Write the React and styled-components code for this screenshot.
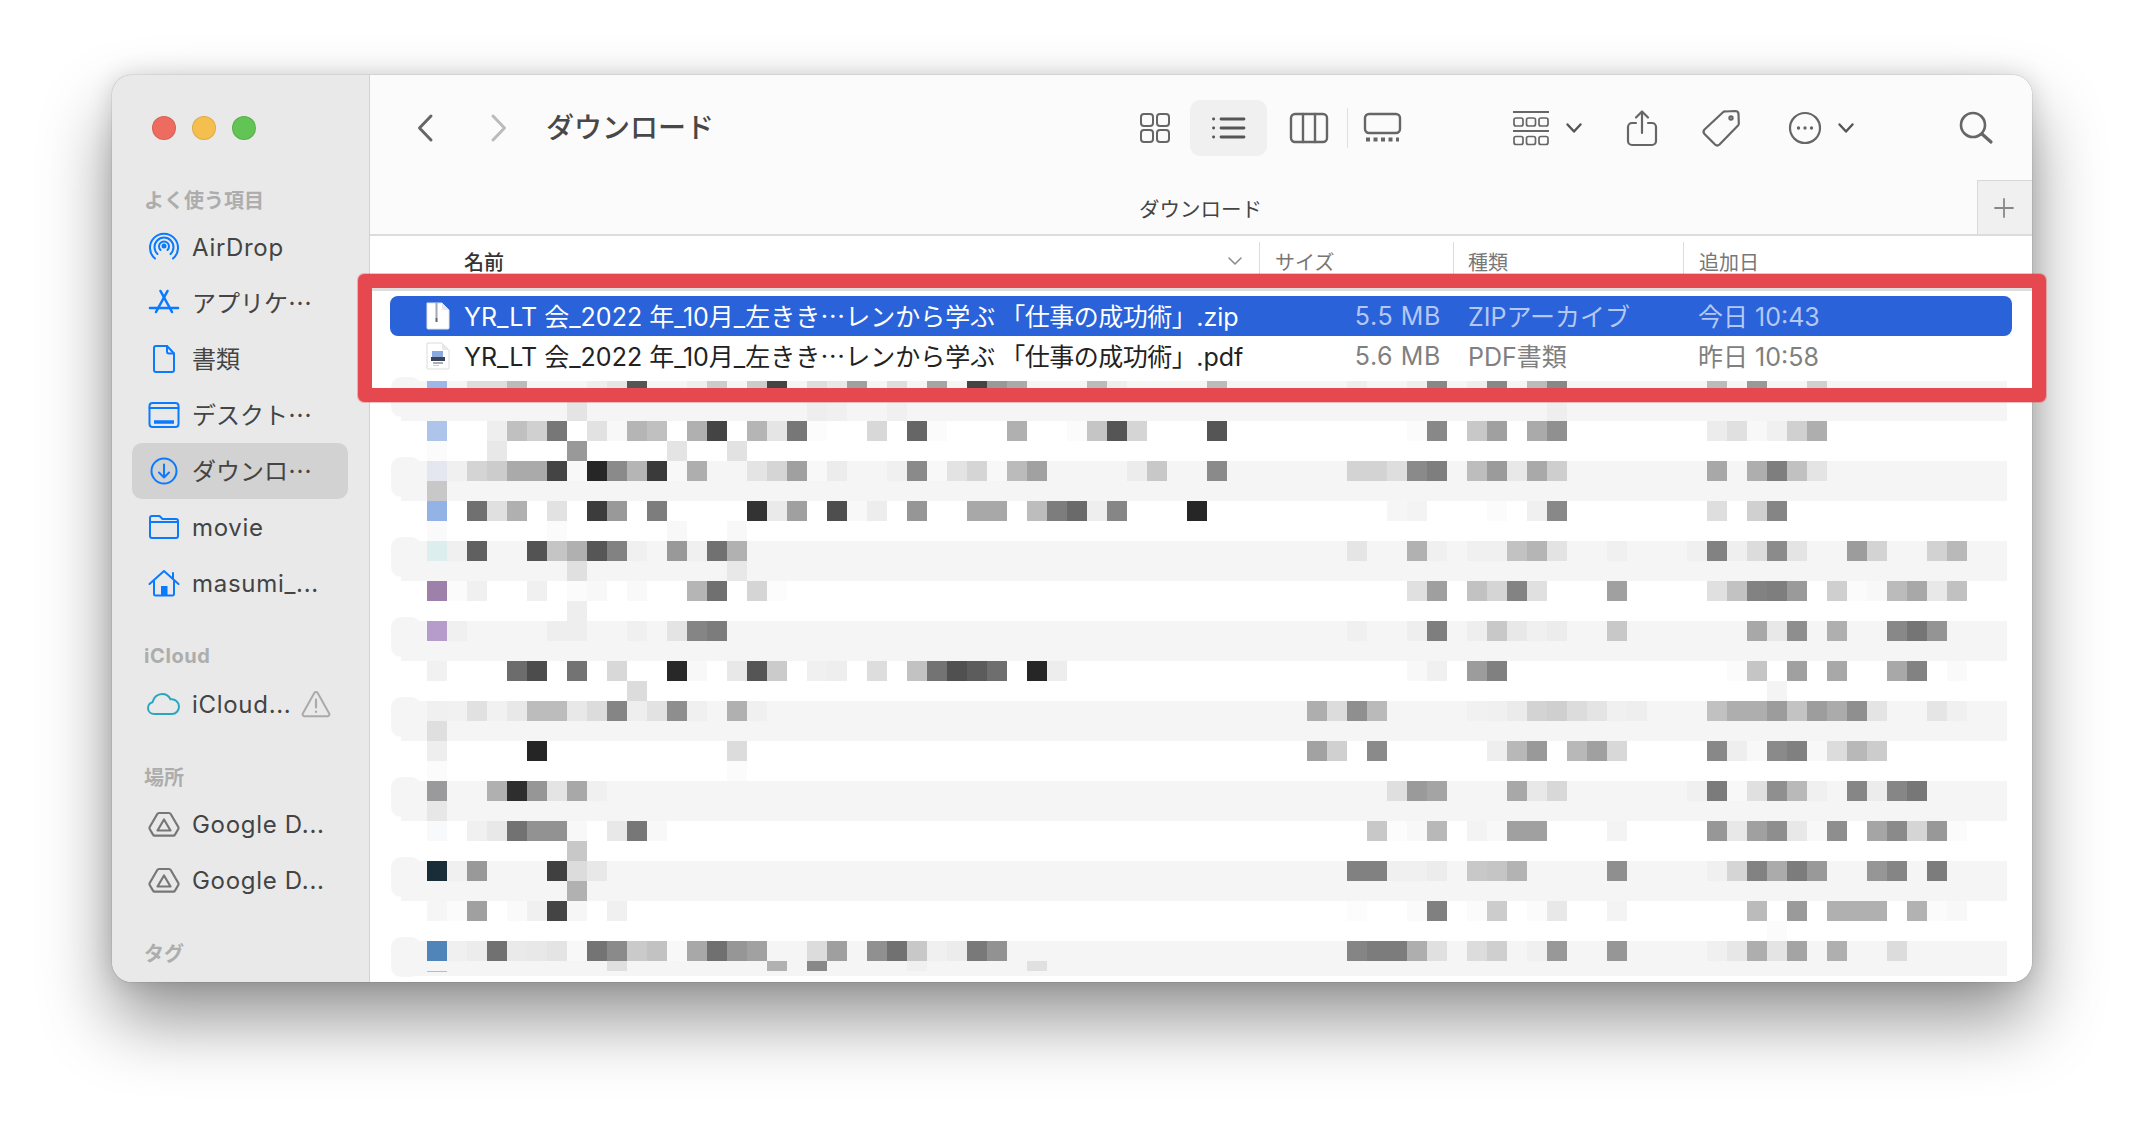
import styled, { createGlobalStyle } from 'styled-components';

const GlobalStyle = createGlobalStyle`
  html, body {
    margin: 0;
    background: #fff;
    font-family: Inter, "Noto Sans CJK JP", sans-serif;
  }
`;

const CJK = `"Noto Sans CJK JP", Inter, sans-serif`;

const Stage = styled.div`
  position: relative;
  width: 2144px;
  height: 1130px;
  padding: 75px 0 0 112px;
  box-sizing: border-box;
  overflow: hidden;
`;

const FinderWindow = styled.div`
  display: flex;
  width: 1920px;
  height: 907px;
  border-radius: 20px;
  overflow: hidden;
  box-shadow: 0 38px 70px rgba(0, 0, 0, 0.42), 0 0 24px rgba(0, 0, 0, 0.14), 0 0 1px rgba(0, 0, 0, 0.6);
`;

/* sidebar */
const Sidebar = styled.aside`
  width: 257px;
  flex-shrink: 0;
  background: #e9e9e9;
  border-right: 1px solid #d2d2d2;
`;

const TrafficLights = styled.div`
  display: flex;
  gap: 16px;
  padding: 41px 0 39px 40px;
`;

const Light = styled.span`
  width: 24px;
  height: 24px;
  border-radius: 50%;
  box-sizing: border-box;
  background: ${({ $color }) => $color};
  border: 1px solid rgba(0, 0, 0, 0.1);
`;

const SectionLabel = styled.div`
  height: 40px;
  line-height: 41px;
  padding-left: 32px;
  margin-top: ${({ $gap }) => $gap || 0}px;
  font-family: ${({ $latin }) => ($latin ? 'Inter, sans-serif' : CJK)};
  font-size: 20px;
  font-weight: 700;
  letter-spacing: ${({ $latin }) => ($latin ? '0.6px' : '0')};
  color: #adadad;
`;

const SideItem = styled.div`
  display: flex;
  align-items: center;
  height: 56px;
  margin: 0 21px 0 20px;
  padding-left: 14px;
  gap: 10px;
  border-radius: 10px;
  background: ${({ $active }) => ($active ? '#d2d2d2' : 'transparent')};
`;

const SideIcon = styled.svg`
  width: 36px;
  height: 36px;
  flex-shrink: 0;
  fill: none;
  stroke: ${({ $tone }) => $tone || '#0a7aff'};
  stroke-width: ${({ $sw }) => $sw || 2};
  stroke-linecap: round;
  stroke-linejoin: round;
`;

const SideText = styled.span`
  font-family: ${({ $cjk }) => ($cjk ? CJK : 'Inter, sans-serif')};
  font-size: 24px;
  letter-spacing: ${({ $cjk }) => ($cjk ? '0' : '0.7px')};
  padding-bottom: ${({ $cjk }) => ($cjk ? '4px' : '0')};
  color: #444;
  white-space: nowrap;
`;

const WarnIcon = styled.svg`
  width: 30px;
  height: 28px;
  fill: none;
  stroke: #aaa;
  stroke-width: 2;
  stroke-linejoin: round;
  stroke-linecap: round;
`;

/* main panel */
const Main = styled.main`
  flex: 1;
  display: flex;
  flex-direction: column;
  min-width: 0;
  background: #fff;
`;

const Toolbar = styled.div`
  display: flex;
  align-items: center;
  height: 105px;
  flex-shrink: 0;
  padding-left: 47px;
  background: #fbfbfb;
`;

const Slot = styled.div`
  display: flex;
  align-items: center;
  justify-content: center;
  flex-shrink: 0;
  width: ${({ $w }) => $w}px;
  margin-left: ${({ $ml }) => $ml || 0}px;
`;

const ActiveSlot = styled(Slot)`
  height: 56px;
  border-radius: 10px;
  background: #f0f0f0;
`;

const Divider = styled.div`
  width: 1px;
  height: 40px;
  margin-left: ${({ $ml }) => $ml}px;
  background: #e0e0e0;
`;

const Tool = styled.svg`
  display: block;
  fill: none;
  stroke: ${({ $tone }) => $tone || '#666'};
  stroke-width: ${({ $sw }) => $sw || 2};
  stroke-linecap: round;
  stroke-linejoin: round;
  overflow: visible;
`;

const Title = styled.h1`
  margin: 0 0 0 39px;
  padding-bottom: 3px;
  width: 163px;
  flex-shrink: 0;
  font-family: ${CJK};
  font-size: 28px;
  font-weight: 500;
  color: #484848;
  white-space: nowrap;
`;

const TabBar = styled.div`
  display: flex;
  align-items: stretch;
  height: 56px;
  flex-shrink: 0;
  box-sizing: border-box;
  background: #fbfbfb;
  border-bottom: 2px solid #dcdcdc;
`;

const TabTitle = styled.div`
  flex: 1;
  padding-left: 769px;
  line-height: 56px;
  font-family: ${CJK};
  font-size: 20.5px;
  color: #444;
`;

const NewTab = styled.div`
  display: flex;
  align-items: center;
  justify-content: center;
  width: 55px;
  padding-right: 2px;
  box-sizing: border-box;
  background: #f0f0f0;
  border-left: 1px solid #d8d8d8;
  border-top: 1px solid #d8d8d8;
`;

const ColumnHeader = styled.div`
  display: flex;
  align-items: flex-end;
  height: 55px;
  flex-shrink: 0;
  box-sizing: border-box;
  border-bottom: 3px solid #dedede;
`;

const ColumnCell = styled.div`
  position: relative;
  display: flex;
  align-items: center;
  justify-content: space-between;
  width: ${({ $w }) => $w}px;
  flex-shrink: 0;
  height: 46px;
  padding-bottom: 8px;
  box-sizing: border-box;
  padding-left: ${({ $pl }) => $pl}px;
  padding-right: ${({ $pr }) => $pr || 0}px;
  border-left: ${({ $line }) => ($line ? '1px solid #dcdcdc' : 'none')};
  font-family: ${CJK};
  font-size: 20px;
  font-weight: ${({ $strong }) => ($strong ? 500 : 400)};
  color: ${({ $strong }) => ($strong ? '#333' : '#777')};
`;

const FileRow = styled.div`
  display: flex;
  align-items: center;
  height: 40px;
  margin-left: 20px;
  width: 1622px;
  margin-top: ${({ $mt }) => $mt || 0}px;
  border-radius: 8px;
  background: ${({ $selected }) => ($selected ? '#2a62d9' : 'transparent')};
  font-size: 25px;
  color: ${({ $selected }) => ($selected ? '#fff' : '#222')};
  white-space: nowrap;
`;

const FileIconBox = styled.svg`
  width: 24px;
  height: 28px;
  margin-left: 36px;
  flex-shrink: 0;
`;

const FileName = styled.span`
  width: 829px;
  flex-shrink: 0;
  margin-left: 14px;
  padding-bottom: 3px;
`;

const Jp = styled.span`
  font-family: ${CJK};
`;

// the quoted part sits a little apart from the kana before it
const QuotedTitle = styled(Jp)`
  margin-left: 5px;
  letter-spacing: -0.5px;
`;

const MetaSize = styled.span`
  width: 148px;
  flex-shrink: 0;
  padding-bottom: 1px;
  text-align: right;
  letter-spacing: 0.6px;
  color: ${({ $selected }) => ($selected ? '#b4c8f3' : '#808080')};
`;

const MetaKind = styled.span`
  width: 230px;
  margin-left: 27px;
  flex-shrink: 0;
  padding-bottom: 3px;
  color: ${({ $selected }) => ($selected ? '#b4c8f3' : '#808080')};
`;

const MetaDate = styled.span`
  padding-bottom: 3px;
  color: ${({ $selected }) => ($selected ? '#b4c8f3' : '#808080')};
`;

/* pixelated rows that hide the other files */
const MosaicList = styled.div`
  flex: 1;
  min-height: 0;
  padding: 5px 0 0 31px;
`;

const MosaicRow = styled.div`
  position: relative;
  width: 1606px;
  height: ${({ $h }) => $h}px;
  background: ${({ $stripe }) => ($stripe ? '#f4f5f4' : 'transparent')};
  ${({ $stripe }) =>
    $stripe
      ? `&::before {
    content: '';
    position: absolute;
    left: -10px;
    top: -4px;
    width: 30px;
    height: 40px;
    border-radius: 10px;
    background: #f4f5f4;
  }`
      : ''}
`;

const MosaicLine = styled.div`
  position: relative;
  display: grid;
  grid-template-columns: repeat(79, 20px);
  grid-template-rows: 1fr;
  height: ${({ $h }) => $h}px;
  padding-left: 26px;
`;

const MosaicCell = styled.div`
  grid-row: 1;
`;

const Annotation = styled.div`
  position: absolute;
  left: 358px;
  top: 274px;
  width: 1688px;
  height: 128px;
  box-sizing: border-box;
  border: 14px solid #e5494f;
  border-radius: 6px;
  box-shadow: 0 0 0 1px rgba(229, 73, 79, 0.35);
`;

const toColor = (v) => (v.length === 2 ? `#${v}${v}${v}` : `#${v}`);

const parseLine = (line) =>
  line
    .split(' ')
    .filter(Boolean)
    .map((token) => {
      const [col, value] = token.split(':');
      return { col: Number(col), color: toColor(value) };
    });

// each row holds two 20px lines of "column:gray" or "column:rrggbb" cells
const MOSAIC = [
  [
    '0:9db8e8 2:dd 3:dd 4:bb 8:ee 9:e5 10:55 13:ee 14:cc 16:cc 17:44 19:dd 20:e8 21:a0 23:dd 25:a5 27:44 28:99 29:aa 33:bb 34:ee 39:bb 46:ee 49:ee 50:88 52:ee 53:88 55:bb 56:88 64:bb 66:99 69:d0',
    '7:e4 19:ee 20:f0 23:f0 56:ee',
  ],
  [
    '0:afc4ea 3:ee 4:c0 5:d0 6:77 8:e2 9:f8 10:b5 11:c0 13:b0 14:44 16:b5 17:e5 18:77 19:fc 22:d8 24:66 25:fb 29:b0 32:fb 33:c5 34:55 35:d5 39:55 49:fb 50:88 52:c8 53:a0 55:aa 56:90 64:ec 65:e0 66:f8 67:f0 68:d0 69:ae',
    '0:fb 3:e8 7:99 12:e4 15:e2',
  ],
  [
    '0:e4e6f0 1:f0 2:d4 3:cc 4:aa 5:aa 6:44 7:f8 8:26 9:8a 10:b5 11:3a 12:f8 13:ae 16:e4 17:d5 18:a0 19:f8 20:ec 23:f0 24:8a 25:f8 26:e3 27:d5 28:f8 29:bb 30:a1 35:ec 36:c8 39:8a 46:d3 47:d3 48:de 49:8a 50:7e 52:bd 53:9b 54:e8 55:a9 56:ce 64:a8 66:ae 67:7e 68:c1 69:e4',
    '0:c8',
  ],
  [
    '0:93b2e6 2:70 3:e0 4:b0 6:e2 8:3c 9:99 11:7d 16:33 17:ea 18:a0 20:4e 21:f8 22:ed 24:96 27:a8 28:a8 30:bd 31:7d 32:6a 33:ee 34:86 38:26 48:f6 49:f3 53:fb 55:f0 56:88 64:de 66:d0 67:85',
    '0:fa 6:fb 12:f8 15:f8',
  ],
  [
    '0:dcefee 1:f0 2:60 5:53 6:c5 7:b0 8:56 9:82 10:f0 12:99 13:f0 14:71 15:b1 46:e5 49:b1 50:f0 52:f0 53:f0 54:c2 55:b5 56:e3 59:f0 63:f0 64:82 65:ef 66:dc 67:8b 68:e4 71:9c 72:d3 75:d2 76:b9',
    '7:e0 15:e8',
  ],
  [
    '0:9d81aa 1:fb 2:f0 5:f0 7:fb 8:f8 10:f9 13:b5 14:70 16:d5 17:fc 49:e0 50:9f 52:c2 53:d5 54:83 55:e0 59:a0 64:e0 65:c2 66:82 67:7e 68:9a 70:cf 71:fb 72:f8 73:bb 74:a8 75:e8 76:c1',
    '7:ee',
  ],
  [
    '0:b69cca 1:f0 6:ee 7:ee 10:f0 12:e4 13:85 14:7c 46:f0 49:ee 50:7e 52:ee 53:c8 54:e8 55:f0 56:ec 59:c8 66:a8 67:e8 68:8e 70:af 73:88 74:75 75:94',
    '',
  ],
  [
    '0:f1 4:6c 5:4c 7:73 9:d8 12:28 13:f8 15:e8 16:55 17:cb 19:f0 20:ee 22:dd 24:c2 25:73 26:50 27:5c 28:6e 30:26 31:ed 49:f8 50:f0 52:9c 53:80 65:fb 66:c5 68:a0 70:a8 73:a8 74:82 76:fa',
    '10:dc 67:f4',
  ],
  [
    '0:f0 1:f1 2:e1 3:f1 4:e8 5:bc 6:bc 7:e8 8:dc 9:85 10:ee 11:e2 12:8e 13:f0 15:b0 16:f0 44:ae 45:dc 46:8f 47:ba 52:f1 53:f0 54:eb 55:d3 56:cf 57:dc 58:e4 59:f0 60:ee 64:c1 65:ae 66:ae 67:9c 68:c3 69:9d 70:ab 71:8f 72:e4 75:e5 76:f0',
    '0:df',
  ],
  [
    '0:ee 5:25 15:dc 44:a2 45:d0 47:8a 53:ee 54:b8 55:99 57:b8 58:a0 59:d8 64:88 65:ee 66:f8 67:8a 68:80 69:f8 70:dc 71:b8 72:cc',
    '0:fb 15:fb',
  ],
  [
    '0:9a9a9d 3:b0 4:2e 5:96 6:e4 7:a8 8:f0 48:df 49:9a 50:a4 54:a8 55:e8 56:d8 63:f0 64:7b 65:f8 66:e0 67:8f 68:b9 69:f0 71:86 72:ec 73:86 74:77',
    '0:e7',
  ],
  [
    '0:f8f9fb 2:f0 3:e8 4:72 5:92 6:92 7:f8 9:e8 10:77 11:f8 47:c8 48:fc 49:f8 50:b8 52:f3 53:f8 54:a0 55:a0 59:f3 64:97 65:e8 66:a0 67:8e 68:e8 69:f8 70:8e 72:a5 73:8a 74:d5 75:98 76:fb',
    '7:c8',
  ],
  [
    '0:192d39 1:f0 2:99 6:40 7:dc 8:e8 46:81 47:81 48:f0 49:f0 50:ec 52:c8 53:c5 54:b3 59:8f 64:f0 65:d5 66:82 67:ab 68:7c 69:99 72:96 73:85 75:7c',
    '7:b1',
  ],
  [
    '0:f6 1:fb 2:a0 4:fa 5:f0 6:44 7:f6 9:f0 46:fc 49:fa 50:80 52:fb 53:cc 55:fb 56:e8 59:f3 66:bb 68:9a 70:b0 71:b0 72:b0 74:b2 75:fb 76:f8',
    '67:fb',
  ],
];

const LAST_ROW = {
  lines: [
    '0:5085ba 1:f0 2:ec 3:71 4:ea 5:e8 6:e4 7:f8 8:74 9:8a 10:ca 11:c2 12:f8 13:a8 14:70 15:96 16:a1 19:dc 20:9f 22:90 23:71 24:c8 25:f0 26:ec 27:79 28:92 46:85 47:7c 48:7c 49:ae 50:e0 52:dc 53:cf 55:f0 56:98 59:96 64:f0 65:e7 66:ae 67:e4 68:a4 70:af 73:dc',
    '9:e0 17:b1 19:88 24:f0 30:e0',
    '0:bb',
  ],
  heights: [20, 10, 1],
};

function Line({ cells, height }) {
  return (
    <MosaicLine $h={height}>
      {parseLine(cells).map(({ col, color }) => (
        <MosaicCell key={col} style={{ gridColumn: col + 1, background: color }} />
      ))}
    </MosaicLine>
  );
}

const FileTitle = ({ ext }) => (
  <FileName>
    YR_LT <Jp>会</Jp>_2022 <Jp>年</Jp>_10<Jp>月</Jp>_<Jp>左きき…レンから学ぶ</Jp>
    <QuotedTitle>「仕事の成功術」</QuotedTitle>.{ext}
  </FileName>
);

const ZipIcon = () => (
  <FileIconBox viewBox="0 0 24 28">
    <path d="M1 1h15l7 7v18a1 1 0 0 1-1 1H2a1 1 0 0 1-1-1z" fill="#fff" stroke="#dfe3ea" />
    <path d="M16 1v6a1 1 0 0 0 1 1h6z" fill="#e4e7ee" />
    <rect x="9.500" y="1" width="2" height="15" fill="#a4a8b0" />
    <rect x="9.500" y="16" width="2" height="4" fill="#5e6269" />
  </FileIconBox>
);

const PdfIcon = () => (
  <FileIconBox viewBox="0 0 24 28">
    <path d="M1 1h15l7 7v18a1 1 0 0 1-1 1H2a1 1 0 0 1-1-1z" fill="#fff" stroke="#dcdcdc" />
    <path d="M16 1v6a1 1 0 0 0 1 1h6z" fill="#e8e8e8" />
    <rect x="6" y="9" width="11" height="6" fill="#8aa9de" />
    <rect x="5" y="15" width="14" height="4" fill="#3a4454" />
    <rect x="7" y="20" width="10" height="2" fill="#a8adb5" />
    <rect x="7" y="23" width="6" height="1" fill="#c8ccd2" />
  </FileIconBox>
);

const Chevron = () => (
  <Tool width="16" height="10" viewBox="0 0 16 10" $tone="#555" $sw={2.4}>
    <path d="M1.500 1.500 8 8.500l6.500-7" />
  </Tool>
);

const DriveGlyph = () => (
  <SideIcon viewBox="0 0 36 36" $tone="#777" $sw={2.2}>
    <path d="M13 7h10a2 2 0 0 1 1.700 1l7.600 13a2 2 0 0 1 0 2l-3.300 5.600a2 2 0 0 1-1.700 1H8.700a2 2 0 0 1-1.700-1L3.700 23a2 2 0 0 1 0-2l7.600-13A2 2 0 0 1 13 7z" />
    <path d="M18 13.500l6.500 11h-13z" />
  </SideIcon>
);

export default function App() {
  return (
    <>
      <GlobalStyle />
      <Stage>
        <FinderWindow>
          <Sidebar>
            <TrafficLights>
              <Light $color="#ee6b60" />
              <Light $color="#f5bf4f" />
              <Light $color="#61c454" />
            </TrafficLights>

            <SectionLabel>よく使う項目</SectionLabel>
            <SideItem>
              <SideIcon viewBox="0 0 36 36">
                <path d="M9 29.500a14 14 0 1 1 18 0" />
                <path d="M11.500 25a9.500 9.500 0 1 1 13 0" />
                <path d="M14.500 21a5 5 0 1 1 7 0" />
                <circle cx="18" cy="17" r="1.500" fill="#0a7aff" />
              </SideIcon>
              <SideText>AirDrop</SideText>
            </SideItem>
            <SideItem>
              <SideIcon viewBox="0 0 36 36" $sw={2.6}>
                <path d="M14.500 6 26 27" />
                <path d="M21.500 6 10 27" />
                <path d="M4 23h28" />
              </SideIcon>
              <SideText $cjk>アプリケ…</SideText>
            </SideItem>
            <SideItem>
              <SideIcon viewBox="0 0 36 36">
                <path d="M10 5h11l7 7.500V29a2 2 0 0 1-2 2H10a2 2 0 0 1-2-2V7a2 2 0 0 1 2-2z" />
                <path d="M21 5v5.500a2 2 0 0 0 2 2h5" />
              </SideIcon>
              <SideText $cjk>書類</SideText>
            </SideItem>
            <SideItem>
              <SideIcon viewBox="0 0 36 36">
                <rect x="3.500" y="6" width="29" height="24" rx="3" />
                <path d="M3.500 11h29" />
                <path d="M8 25h20" strokeWidth="3.500" strokeLinecap="butt" />
              </SideIcon>
              <SideText $cjk>デスクト…</SideText>
            </SideItem>
            <SideItem $active>
              <SideIcon viewBox="0 0 36 36">
                <circle cx="18" cy="18" r="12.500" />
                <path d="M18 11.500v13M13 19.500l5 5 5-5" />
              </SideIcon>
              <SideText $cjk>ダウンロ…</SideText>
            </SideItem>
            <SideItem>
              <SideIcon viewBox="0 0 36 36">
                <path d="M4 9a2 2 0 0 1 2-2h7.500l3 3H30a2 2 0 0 1 2 2v15a2 2 0 0 1-2 2H6a2 2 0 0 1-2-2z" />
                <path d="M4 13h28" />
              </SideIcon>
              <SideText>movie</SideText>
            </SideItem>
            <SideItem>
              <SideIcon viewBox="0 0 36 36">
                <path d="M3.500 19 18 6l14.500 13" />
                <path d="M8 16v13a1.500 1.500 0 0 0 1.500 1.500h17A1.500 1.500 0 0 0 28 29V16" />
                <path d="M27 8v5" />
                <rect x="15" y="21" width="6.500" height="9.500" fill="#0a7aff" stroke="none" />
              </SideIcon>
              <SideText>masumi_...</SideText>
            </SideItem>

            <SectionLabel $gap={25} $latin>iCloud</SectionLabel>
            <SideItem>
              <SideIcon viewBox="0 0 36 36" $tone="#2ba6c1">
                <path d="M8 28a6 6 0 0 1-1.500-11.800C7.500 11.500 11.500 8 16 8c3.700 0 7 2 8.500 5.300A7.300 7.300 0 0 1 33 20.500c0 4-3 7.500-7 7.500z" />
              </SideIcon>
              <SideText>iCloud...</SideText>
              <WarnIcon viewBox="0 0 30 28">
                <path d="M13.300 3 1.800 23.500a1.800 1.800 0 0 0 1.600 2.700h23.200a1.800 1.800 0 0 0 1.600-2.700L16.700 3a2 2 0 0 0-3.400 0z" />
                <path d="M15 9.500v8M15 21.500v.4" strokeWidth="2.200" />
              </WarnIcon>
            </SideItem>

            <SectionLabel $gap={24}>場所</SectionLabel>
            <SideItem>
              <DriveGlyph />
              <SideText>Google D...</SideText>
            </SideItem>
            <SideItem>
              <DriveGlyph />
              <SideText>Google D...</SideText>
            </SideItem>

            <SectionLabel $gap={24}>タグ</SectionLabel>
          </Sidebar>

          <Main>
            <Toolbar>
              <Slot $w={16}>
                <Tool width="16" height="28" viewBox="0 0 16 28" $sw={3}>
                  <path d="M14 2 2.500 14 14 26" />
                </Tool>
              </Slot>
              <Slot $w={16} $ml={58}>
                <Tool width="16" height="28" viewBox="0 0 16 28" $sw={3} $tone="#bbb">
                  <path d="M2 2l11.500 12L2 26" />
                </Tool>
              </Slot>
              <Title>ダウンロード</Title>

              <Slot $w={30} $ml={431}>
                <Tool width="30" height="30" viewBox="0 0 30 30">
                  <rect x="1" y="1" width="12" height="12" rx="3" />
                  <rect x="17" y="1" width="12" height="12" rx="3" />
                  <rect x="1" y="17" width="12" height="12" rx="3" />
                  <rect x="17" y="17" width="12" height="12" rx="3" />
                </Tool>
              </Slot>
              <ActiveSlot $w={77} $ml={20}>
                <Tool width="33" height="24" viewBox="0 0 33 24" $sw={2.8} $tone="#555">
                  <path d="M9 3h23M9 12h23M9 21h23" />
                  <path d="M1.500 3h.2M1.500 12h.2M1.500 21h.2" />
                </Tool>
              </ActiveSlot>
              <Slot $w={38} $ml={23}>
                <Tool width="38" height="30" viewBox="0 0 38 30" $sw={2.4}>
                  <rect x="1" y="1" width="36" height="28" rx="4" />
                  <path d="M13 1v28M25 1v28" />
                </Tool>
              </Slot>
              <Divider $ml={19} />
              <Slot $w={37} $ml={16}>
                <Tool width="37" height="29" viewBox="0 0 37 29" $sw={2.4}>
                  <rect x="1" y="1" width="35" height="19" rx="4" />
                  <path d="M2 26.500h4M9.500 26.500h4M17 26.500h4M24.500 26.500h4M32 26.500h3" strokeWidth="4" strokeLinecap="butt" />
                </Tool>
              </Slot>

              <Slot $w={36} $ml={112}>
                <Tool width="36" height="34" viewBox="0 0 36 34" $sw={1.7}>
                  <path d="M0 1h36M0 20h36" strokeWidth="2.200" strokeLinecap="butt" />
                  <rect x="1" y="7" width="9" height="8" rx="2" />
                  <rect x="13.500" y="7" width="9" height="8" rx="2" />
                  <rect x="26" y="7" width="9" height="8" rx="2" />
                  <rect x="1" y="25.500" width="9" height="8" rx="2" />
                  <rect x="13.500" y="25.500" width="9" height="8" rx="2" />
                  <rect x="26" y="25.500" width="9" height="8" rx="2" />
                </Tool>
              </Slot>
              <Slot $w={16} $ml={17}>
                <Chevron />
              </Slot>
              <Slot $w={30} $ml={45}>
                <Tool width="30" height="36" viewBox="0 0 30 36" $sw={2.2}>
                  <path d="M15 2v21M9 7.500 15 1.500l6 6" />
                  <path d="M9 13H5a4 4 0 0 0-4 4v14a4 4 0 0 0 4 4h20a4 4 0 0 0 4-4V17a4 4 0 0 0-4-4h-4" />
                </Tool>
              </Slot>
              <Slot $w={38} $ml={45}>
                <Tool width="38" height="38" viewBox="0 0 38 38" $sw={2.2}>
                  <path d="M23.500 2.500 33 2q3.500 0 3.500 3l.3 9.500a3 3 0 0 1-.8 2L17.500 35.500q-2.300 2-4.500 0L2.500 25q-2-2.200 0-4.500L21 3.300a3 3 0 0 1 2.500-.8z" />
                  <circle cx="29" cy="9" r="1.600" />
                </Tool>
              </Slot>
              <Slot $w={32} $ml={49}>
                <Tool width="32" height="32" viewBox="0 0 32 32" $sw={2.2}>
                  <circle cx="16" cy="16" r="15" />
                  <circle cx="9.500" cy="16" r="1.700" fill="#666" stroke="none" />
                  <circle cx="16" cy="16" r="1.700" fill="#666" stroke="none" />
                  <circle cx="22.500" cy="16" r="1.700" fill="#666" stroke="none" />
                </Tool>
              </Slot>
              <Slot $w={17} $ml={16}>
                <Chevron />
              </Slot>
              <Slot $w={34} $ml={105}>
                <Tool width="34" height="31" viewBox="0 0 34 31" $sw={2.6}>
                  <circle cx="14" cy="13" r="12" />
                  <path d="M23 22l9 8" strokeWidth="3.200" />
                </Tool>
              </Slot>
            </Toolbar>

            <TabBar>
              <TabTitle>ダウンロード</TabTitle>
              <NewTab>
                <Tool width="20" height="20" viewBox="0 0 20 20" $sw={1.8} $tone="#888">
                  <path d="M10 1v18M1 10h18" />
                </Tool>
              </NewTab>
            </TabBar>

            <ColumnHeader>
              <ColumnCell $w={889} $pl={94} $pr={17} $strong>
                名前
                <Tool width="14" height="8" viewBox="0 0 14 8" $sw={1.5} $tone="#888">
                  <path d="M1 1l6 6 6-6" />
                </Tool>
              </ColumnCell>
              <ColumnCell $w={194} $pl={15} $line>サイズ</ColumnCell>
              <ColumnCell $w={230} $pl={14} $line>種類</ColumnCell>
              <ColumnCell $w={300} $pl={15} $line>追加日</ColumnCell>
            </ColumnHeader>

            <FileRow $selected $mt={5}>
              <ZipIcon />
              <FileTitle ext="zip" />
              <MetaSize $selected>5.5 MB</MetaSize>
              <MetaKind $selected>ZIP<Jp>アーカイブ</Jp></MetaKind>
              <MetaDate $selected><Jp>今日</Jp> 10:43</MetaDate>
            </FileRow>
            <FileRow>
              <PdfIcon />
              <FileTitle ext="pdf" />
              <MetaSize>5.6 MB</MetaSize>
              <MetaKind>PDF<Jp>書類</Jp></MetaKind>
              <MetaDate><Jp>昨日</Jp> 10:58</MetaDate>
            </FileRow>

            <MosaicList>
              {MOSAIC.map((lines, i) => (
                <MosaicRow key={i} $h={40} $stripe={i % 2 === 0}>
                  {lines.map((cells, j) => (
                    <Line key={j} cells={cells} height={20} />
                  ))}
                </MosaicRow>
              ))}
              <MosaicRow $h={35} $stripe>
                {LAST_ROW.lines.map((cells, j) => (
                  <Line key={j} cells={cells} height={LAST_ROW.heights[j]} />
                ))}
              </MosaicRow>
            </MosaicList>
          </Main>
        </FinderWindow>
        <Annotation />
      </Stage>
    </>
  );
}
